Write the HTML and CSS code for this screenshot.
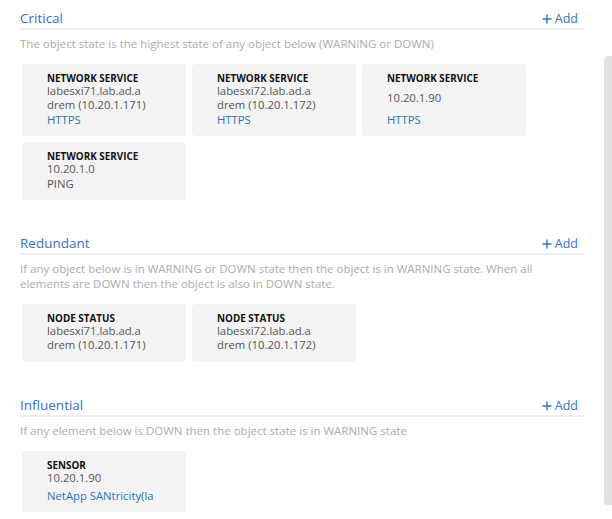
FILE: index.html
```html
<!DOCTYPE html>
<html lang="en">
<head>
<meta charset="utf-8">
<title>Dependencies</title>
<link rel="stylesheet" href="styles.css">
</head>
<body>
<div class="page">
  <main class="content">
    <section class="group">
      <div class="group-head">
        <h2 class="group-title">Critical</h2>
        <a class="add" href="#"><svg class="plus" viewBox="0 0 10 10" width="10" height="10"><path d="M5 0.5V9.5M0.5 5H9.5" stroke="currentColor" stroke-width="1.4" fill="none"/></svg>Add</a>
      </div>
      <p class="group-desc">The object state is the highest state of any object below (WARNING or DOWN)</p>
      <div class="cards">
        <div class="card">
          <div class="card-type">NETWORK SERVICE</div>
          <div class="card-name">labesxi71.lab.ad.a<br>drem (10.20.1.171)</div>
          <div class="card-link">HTTPS</div>
        </div>
        <div class="card">
          <div class="card-type">NETWORK SERVICE</div>
          <div class="card-name">labesxi72.lab.ad.a<br>drem (10.20.1.172)</div>
          <div class="card-link">HTTPS</div>
        </div>
        <div class="card">
          <div class="card-type">NETWORK SERVICE</div>
          <div class="card-name card-name-tall">10.20.1.90</div>
          <div class="card-link">HTTPS</div>
        </div>
        <div class="card">
          <div class="card-type">NETWORK SERVICE</div>
          <div class="card-name">10.20.1.0</div>
          <div class="card-link card-link-plain">PING</div>
        </div>
      </div>
    </section>

    <section class="group">
      <div class="group-head">
        <h2 class="group-title">Redundant</h2>
        <a class="add" href="#"><svg class="plus" viewBox="0 0 10 10" width="10" height="10"><path d="M5 0.5V9.5M0.5 5H9.5" stroke="currentColor" stroke-width="1.4" fill="none"/></svg>Add</a>
      </div>
      <p class="group-desc">If any object below is in WARNING or DOWN state then the object is in WARNING state. When all elements are DOWN then the object is also in DOWN state.</p>
      <div class="cards">
        <div class="card card-two">
          <div class="card-type">NODE STATUS</div>
          <div class="card-name">labesxi71.lab.ad.a<br>drem (10.20.1.171)</div>
        </div>
        <div class="card card-two">
          <div class="card-type">NODE STATUS</div>
          <div class="card-name">labesxi72.lab.ad.a<br>drem (10.20.1.172)</div>
        </div>
      </div>
    </section>

    <section class="group">
      <div class="group-head">
        <h2 class="group-title">Influential</h2>
        <a class="add" href="#"><svg class="plus" viewBox="0 0 10 10" width="10" height="10"><path d="M5 0.5V9.5M0.5 5H9.5" stroke="currentColor" stroke-width="1.4" fill="none"/></svg>Add</a>
      </div>
      <p class="group-desc">If any element below is DOWN then the object state is in WARNING state</p>
      <div class="cards">
        <div class="card">
          <div class="card-type">SENSOR</div>
          <div class="card-name">10.20.1.90</div>
          <div class="card-link card-link-wide">NetApp SANtricity(la</div>
        </div>
      </div>
    </section>
  </main>
  <div class="scroll-track"><div class="scroll-thumb"></div></div>
</div>
</body>
</html>
```

FILE: styles.css
```css
html, body {
  margin: 0;
  padding: 0;
  background: #ffffff;
}

body {
  font-family: "Open Sans", "Noto Sans", sans-serif;
  color: #555555;
  overflow: hidden;
}

.page {
  display: flex;
  height: 519px;
}

.content {
  flex: 1;
  padding: 9px 20px 0 20px;
}

.group {
  margin-bottom: 34px;
}

.group-head {
  display: flex;
  justify-content: space-between;
  align-items: flex-end;
  border-bottom: 2px solid #efefef;
  padding-bottom: 1px;
}

.group-title {
  margin: 0;
  font-size: 13.5px;
  line-height: 18px;
  font-weight: 400;
  color: #3a70c4;
}

.add {
  display: flex;
  align-items: center;
  gap: 3px;
  margin-right: 6px;
  font-size: 12.5px;
  line-height: 16px;
  color: #3a70c4;
  text-decoration: none;
}

.plus {
  display: block;
}

.group-desc {
  margin: 6px 0 0 0;
  font-size: 11.5px;
  line-height: 15px;
  color: #ababab;
}

.cards {
  display: flex;
  flex-wrap: wrap;
  gap: 6px;
  margin-top: 13px;
  padding-left: 2px;
}

.card {
  width: 164px;
  box-sizing: border-box;
  padding: 8px 6px 9px 25px;
  background: #f4f4f4;
  border-radius: 4px;
}

.card-two {
  padding-bottom: 10px;
}

.card-type {
  font-size: 9.9px;
  line-height: 12px;
  font-weight: 700;
  color: #111111;
}

.card-name {
  font-size: 11.3px;
  line-height: 14px;
  color: #555555;
}

.card-name-tall {
  min-height: 28px;
  display: flex;
  align-items: center;
}

.card-link {
  margin-top: 1px;
  font-size: 11.3px;
  line-height: 14px;
  color: #2a72b5;
}

.card-link-plain {
  color: #555555;
}

.card-link-wide {
  margin-top: 4px;
}

.scroll-track {
  width: 8px;
  padding-top: 56px;
}

.scroll-thumb {
  height: 449px;
  background: #e2e2e2;
  border-radius: 4px 0 0 4px;
}
```
